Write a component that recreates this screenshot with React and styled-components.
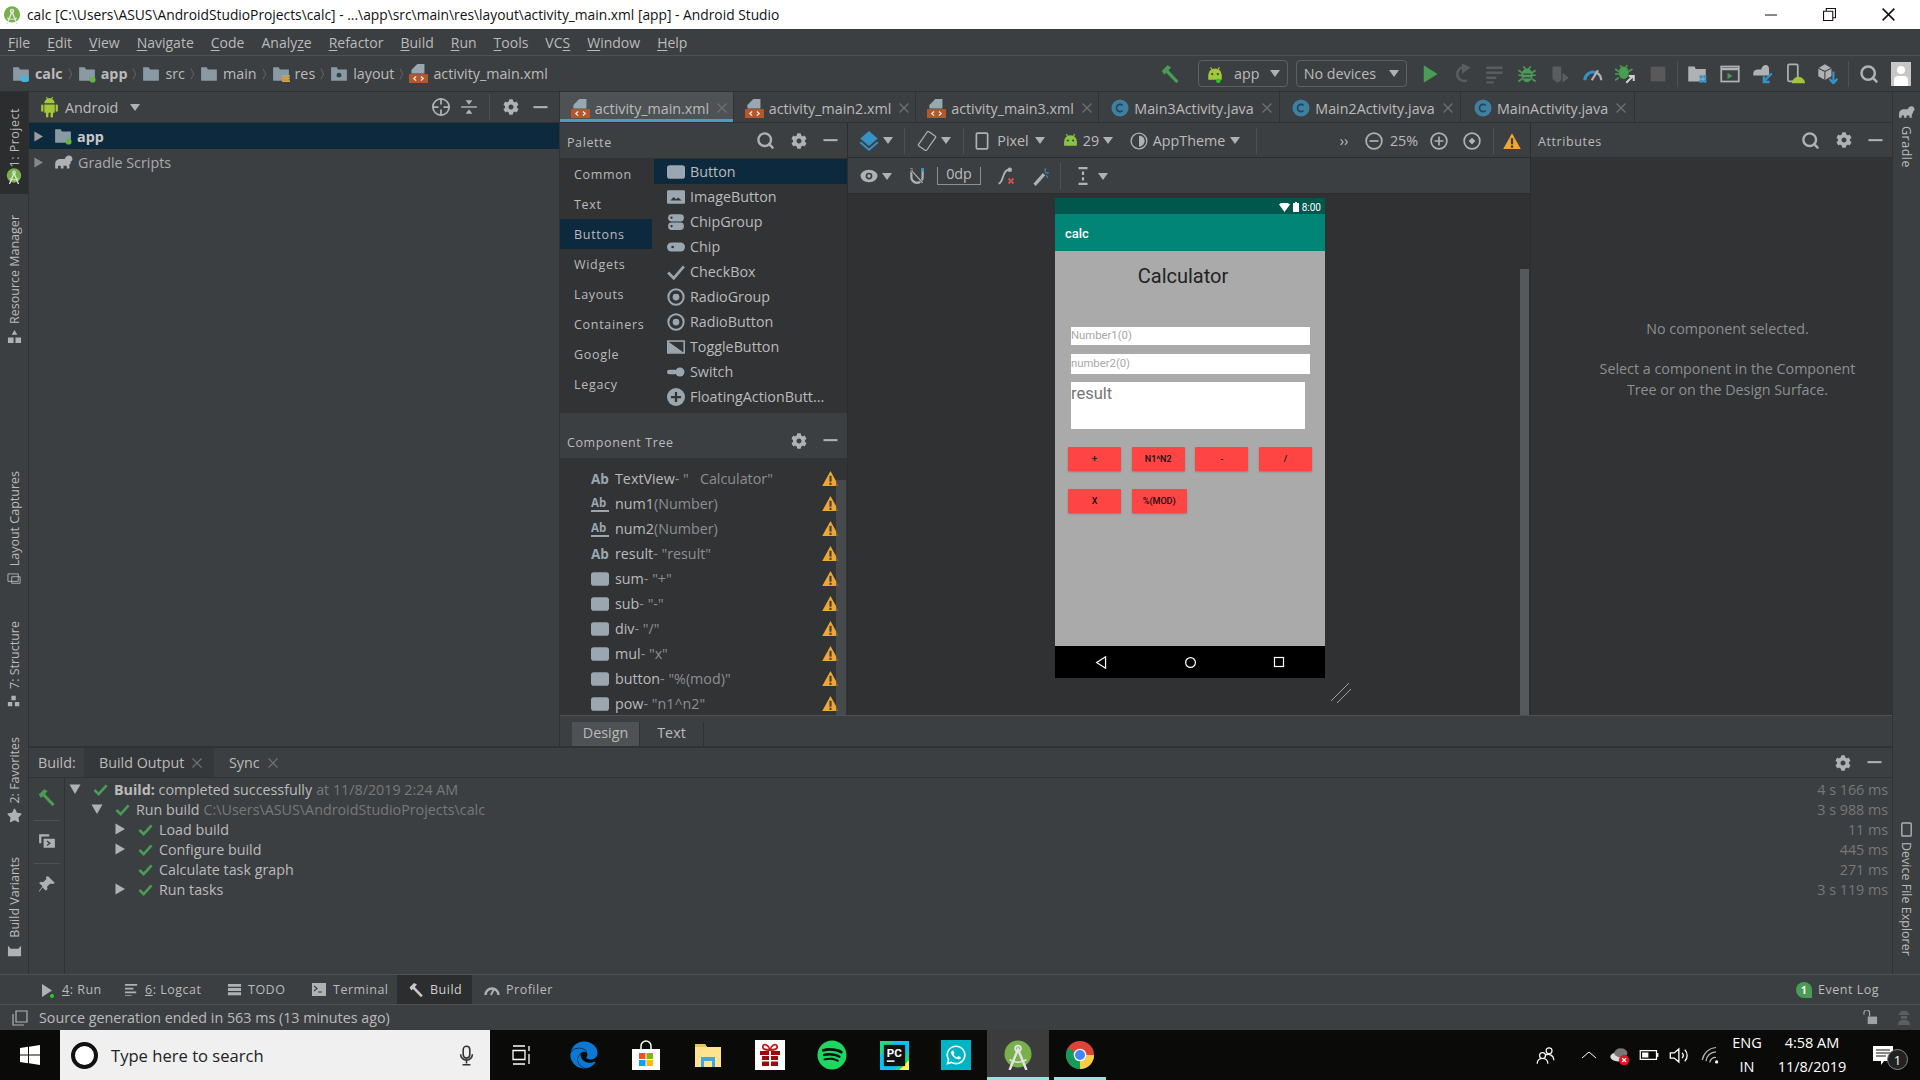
import React from "react";
import styled, { createGlobalStyle } from "styled-components";
import { Search } from "lucide-react";
import { FaCog, FaEdge, FaSpotify, FaWhatsapp, FaStar } from "react-icons/fa";

const UI = `"Open Sans", "Noto Sans", sans-serif`;
const GREY = "#afb1b3";

const GlobalStyle = createGlobalStyle`
  html, body { margin: 0; padding: 0; background: #3c3f41; }
  * { box-sizing: border-box; }
`;

/* icons */
const Ic = ({ s = 16, w, h, vb = "0 0 16 16", children }) => (
  <svg width={w || s} height={h || s} viewBox={vb} style={{ flexShrink: 0, display: "block" }}>
    {children}
  </svg>
);
const Folder = ({ s = 18, children }) => (
  <Ic s={s}>
    <path d="M1 2h5l1 2h8v10H1z" fill="#8a9aa5" />
    {children}
  </Ic>
);
const AppFolder = ({ s }) => (
  <Folder s={s}>
    <circle cx="13" cy="13" r="2.6" fill="#62b543" />
  </Folder>
);
const CalcFolder = () => (
  <Folder>
    <path d="M8 10h7v3a2 2 0 0 1-2 2h-3a2 2 0 0 1-2-2z" fill="#40b6e0" />
  </Folder>
);
const ResFolder = () => (
  <Folder>
    <path d="M9 9h7v1.4H9zM9 11.3h7v1.4H9zM9 13.6h7V15H9z" fill="#d9a343" />
  </Folder>
);
const LayoutFolder = () => (
  <Folder>
    <circle cx="8" cy="9" r="2.2" fill="#3c3f41" />
  </Folder>
);
const Xml = () => (
  <Ic s={19}>
    <path d="M7 0h6v8H2V5z" fill="#9aa7b0" />
    <rect x="0" y="8.5" width="16" height="7.5" fill="#b4572a" />
    <path d="M6 10.5 4 12.2l2 1.8M10 10.5l2 1.7-2 1.8" fill="none" stroke="#eee" strokeWidth="1" />
  </Ic>
);
const ClassIcon = () => (
  <Ic s={18}>
    <circle cx="8" cy="8" r="7.6" fill="#3f7f9f" />
    <path d="M10.4 5.8a3.2 3.2 0 1 0 0 4.4" fill="none" stroke="#20465a" strokeWidth="1.4" />
  </Ic>
);
const Android = ({ s = 18, c = "#a4c639", dot }) => (
  <Ic s={s}>
    <path d="M2 9a6 6 0 0 1 12 0v4H2z" fill={c} />
    <path d="M4 2l2 3M12 2l-2 3" stroke={c} strokeWidth="1" />
    <circle cx="5.5" cy="8" r="1" fill="#3c3f41" />
    <circle cx="10.5" cy="8" r="1" fill="#3c3f41" />
    {dot && <circle cx="11" cy="14" r="2" fill="#1fd11f" />}
  </Ic>
);
const AndroidFull = () => (
  <Ic w={17} h={22} vb="0 0 16 21">
    <path d="M3 7a5 5 0 0 1 10 0zM3 8h10v8H3z" fill="#a4c639" />
    <path d="M5 1l1.4 2.4M11 1L9.6 3.4" stroke="#a4c639" />
    <rect x="0" y="8" width="2.2" height="7" rx="1" fill="#a4c639" />
    <rect x="13.8" y="8" width="2.2" height="7" rx="1" fill="#a4c639" />
    <rect x="4.6" y="15" width="2.4" height="5.5" rx="1" fill="#a4c639" />
    <rect x="9" y="15" width="2.4" height="5.5" rx="1" fill="#a4c639" />
  </Ic>
);
const StudioBadge = ({ s = 18 }) => (
  <Ic s={s}>
    <circle cx="8" cy="7.5" r="7.2" fill="#78b04a" />
    <path d="M3.5 16 8 5l4.5 11" fill="none" stroke="#e4e4e4" strokeWidth="1.3" />
    <path d="M3.5 10.5a6 4 0 0 0 9 0" fill="none" stroke="#e4e4e4" strokeWidth=".9" />
    <circle cx="8" cy="4.5" r="1.5" fill="none" stroke="#e4e4e4" strokeWidth="1" />
  </Ic>
);
const Elephant = ({ s = 20, c = GREY }) => (
  <Ic s={s}>
    <path d="M1 13V9c0-2.5 2-4 4.5-4H9c.6-1.8 2-3 3.6-3C14.5 2 15.5 3.3 15.5 5c0 1.3-.6 2-1.5 2.2V9l-1 .5V13h-2.2v-2.2H8V13H5.7v-2.2H3.4V13z" fill={c} />
  </Ic>
);
const Hammer = ({ s = 18, c = "#499c54" }) => (
  <Ic s={s}>
    <path d="M1.5 5.5 6 1l3 1.5L6.800 5l8 8.500-1.800 1.800-8-8.300-1.600 1.500z" fill={c} />
  </Ic>
);
const Check = ({ s = 15 }) => (
  <Ic s={s}>
    <path d="M1.5 8.500 6 13 14.500 3.500" fill="none" stroke="#499c54" strokeWidth="2.8" />
  </Ic>
);
const Tri = ({ dir = "right", s = 12, c = GREY }) => (
  <Ic s={s} vb="0 0 12 12">
    <path d={dir === "right" ? "M1.5 0.500 11 6l-9.500 5.500z" : "M0.5 1.500h11L6 11z"} fill={c} />
  </Ic>
);
const Caret = ({ c = GREY }) => (
  <Ic w={10} h={7} vb="0 0 10 7">
    <path d="M0 0h10L5 7z" fill={c} />
  </Ic>
);
const Gear = ({ s = 16 }) => <FaCog size={s} color={GREY} />;
const Find = ({ s = 19 }) => <Search size={s} color={GREY} strokeWidth={3} />;
const Dash = () => (
  <Ic s={15}>
    <rect x="0.5" y="6.5" width="15" height="2.2" fill={GREY} />
  </Ic>
);
const Warn = ({ s = 17 }) => (
  <Ic s={s}>
    <path d="M8 1 15.800 15H.2z" fill="#f0a732" />
    <rect x="7" y="5.5" width="2" height="5.5" fill="#3c3f41" />
    <rect x="7" y="12" width="2" height="2" fill="#3c3f41" />
  </Ic>
);
const CloseX = ({ s = 10, c = "#6f7173" }) => (
  <Ic s={s} vb="0 0 10 10">
    <path d="M.5.5l9 9M9.500.500l-9 9" stroke={c} strokeWidth="1.2" />
  </Ic>
);
const BtnGlyph = ({ s = 18 }) => (
  <Ic s={s}>
    <rect x="0" y="2" width="16" height="12" rx="2.5" fill="#9aa7b0" />
  </Ic>
);
const Ring = ({ s = 18, inner = 3 }) => (
  <Ic s={s}>
    <circle cx="8" cy="8" r="6.8" fill="none" stroke="#9aa7b0" strokeWidth="1.8" />
    <circle cx="8" cy="8" r={inner} fill="#9aa7b0" />
  </Ic>
);
const Glyphs = {
  Button: <BtnGlyph />,
  ImageButton: (
    <Ic s={18}>
      <rect y="2" width="16" height="12" rx="1" fill="#9aa7b0" />
      <path d="M3 11l3-3 2 2 2-1.500 3 2.500z" fill="#313335" />
    </Ic>
  ),
  ChipGroup: (
    <Ic s={18}>
      <rect x="1" y="1" width="14" height="6.5" rx="3" fill="#9aa7b0" />
      <rect x="1" y="8.5" width="14" height="6.5" rx="3" fill="#9aa7b0" />
      <circle cx="4" cy="4.2" r="1" fill="#313335" />
      <circle cx="4" cy="11.7" r="1" fill="#313335" />
    </Ic>
  ),
  Chip: (
    <Ic s={18}>
      <rect y="4" width="16" height="8" rx="4" fill="#9aa7b0" />
      <circle cx="5" cy="8" r="1.2" fill="#313335" />
    </Ic>
  ),
  CheckBox: (
    <Ic s={18}>
      <path d="M1 8.500 6 13.500 15 3" fill="none" stroke="#9aa7b0" strokeWidth="2.4" />
    </Ic>
  ),
  RadioGroup: <Ring />,
  RadioButton: <Ring />,
  ToggleButton: (
    <Ic s={18}>
      <rect x=".7" y="2.7" width="14.6" height="10.6" fill="none" stroke="#9aa7b0" strokeWidth="1.4" />
      <path d="M1 3l14 10H1z" fill="#9aa7b0" />
    </Ic>
  ),
  Switch: (
    <Ic s={18}>
      <rect y="6" width="9" height="4" rx="2" fill="#9aa7b0" />
      <circle cx="11.5" cy="8" r="4" fill="#9aa7b0" />
    </Ic>
  ),
  "FloatingActionButt...": (
    <Ic s={18}>
      <circle cx="8" cy="8" r="8" fill="#9aa7b0" />
      <path d="M8 3.500v9M3.500 8h9" stroke="#313335" strokeWidth="2" />
    </Ic>
  ),
};

/* shell */
const Page = styled.div`
  width: 1920px;
  height: 1080px;
  display: flex;
  flex-direction: column;
  overflow: hidden;
  background: #3c3f41;
  color: #bbbbbb;
  font-family: ${UI};
  font-size: 14.3px;
`;
const TitleBar = styled.div`
  height: 29px;
  flex-shrink: 0;
  background: #fff;
  color: #111;
  display: flex;
  align-items: center;
  padding: 0 2px 0 3px;
  font-size: 13.8px;
`;
const TitleText = styled.div`
  flex: 1;
  margin-left: 6px;
  white-space: nowrap;
`;
const WinBtn = styled.div`
  width: 59px;
  display: flex;
  justify-content: center;
`;
const MenuBar = styled.div`
  height: 27px;
  flex-shrink: 0;
  display: flex;
  align-items: center;
  gap: 17px;
  padding-left: 8px;
  font-size: 14px;
  border-bottom: 1px solid #515151;
  u { text-underline-offset: 2px; }
`;
const NavBar = styled.div`
  height: 36px;
  flex-shrink: 0;
  display: flex;
  align-items: center;
  padding: 0 9px 0 12px;
  border-bottom: 1px solid #2f3132;
`;
const Crumb = styled.div`
  display: flex;
  align-items: center;
  gap: 5px;
  font-weight: ${(p) => (p.$bold ? 700 : 400)};
`;
const CrumbSep = styled.div`
  width: 8px;
  height: 8px;
  margin: 0 5px 0 2px;
  border-top: 1px solid #6b6d6f;
  border-right: 1px solid #6b6d6f;
  transform: scaleX(0.55) rotate(45deg);
`;
const NavRight = styled.div`
  margin-left: auto;
  display: flex;
  align-items: center;
`;
const Combo = styled.div`
  width: ${(p) => p.$w}px;
  height: 27px;
  margin-left: ${(p) => p.$ml || 0}px;
  border: 1px solid #5e6060;
  border-radius: 4px;
  display: flex;
  align-items: center;
  justify-content: space-between;
  padding: 0 7px;
  gap: 4px;
`;
const Slot = styled.div`
  width: ${(p) => p.$w}px;
  flex-shrink: 0;
  display: flex;
  align-items: center;
  justify-content: center;
  gap: ${(p) => p.$gap || 0}px;
`;
const VSep = styled.div`
  width: 1px;
  height: 26px;
  flex-shrink: 0;
  background: #515151;
  margin: 0 ${(p) => p.$m || 0}px;
`;
const Avatar = styled.div`
  width: 20px;
  height: 24px;
  background: #c7c7c7;
  position: relative;
  overflow: hidden;
  margin-left: 6px;
  &::before {
    content: "";
    position: absolute;
    left: 6px;
    top: 4px;
    width: 8px;
    height: 8px;
    border-radius: 50%;
    background: #fff;
  }
  &::after {
    content: "";
    position: absolute;
    left: 3px;
    top: 14px;
    width: 14px;
    height: 12px;
    border-radius: 4px 4px 0 0;
    background: #fff;
  }
`;

const Main = styled.div`
  height: 882px;
  flex-shrink: 0;
  display: flex;
`;
const LeftStripe = styled.div`
  width: 29px;
  flex-shrink: 0;
  border-right: 1px solid #323232;
  display: flex;
  flex-direction: column;
  align-items: stretch;
`;
const RightStripe = styled.div`
  width: 28px;
  flex-shrink: 0;
  border-left: 1px solid #323232;
  display: flex;
  flex-direction: column;
  align-items: center;
  justify-content: space-between;
  padding: 12px 0 18px;
`;
const StripeItem = styled.div`
  display: flex;
  flex-direction: column;
  align-items: center;
  gap: ${(p) => (p.$active ? 1 : 5)}px;
  margin-top: ${(p) => p.$mt || 0}px;
  padding: ${(p) => (p.$active ? "16px 0 10px" : "0")};
  background: ${(p) => (p.$active ? "#2b2d2e" : "transparent")};
`;
const VText = styled.div`
  writing-mode: vertical-rl;
  transform: ${(p) => (p.$down ? "none" : "rotate(180deg)")};
  font-size: 12.5px;
  white-space: nowrap;
  letter-spacing: ${(p) => p.$ls || 0}px;
`;
const Center = styled.div`
  flex: 1;
  min-width: 0;
  display: flex;
  flex-direction: column;
`;
const Upper = styled.div`
  height: 654px;
  flex-shrink: 0;
  display: flex;
`;

/* project */
const Project = styled.div`
  width: 531px;
  flex-shrink: 0;
  background: #3c3f41;
  border-right: 1px solid #323232;
`;
const PanelHead = styled.div`
  height: ${(p) => p.$h || 31}px;
  display: flex;
  align-items: center;
  padding: 0 ${(p) => p.$pr || 0}px 0 ${(p) => p.$pl || 0}px;
  border-bottom: 1px solid #323232;
  gap: ${(p) => p.$gap || 0}px;
`;
const HeadLabel = styled.div`
  font-size: 12.5px;
  letter-spacing: 0.6px;
  margin-right: auto;
  padding-top: 3px;
`;
const ProjRow = styled.div`
  height: 26px;
  display: flex;
  align-items: center;
  padding-left: 4px;
  gap: 10px;
  font-weight: ${(p) => (p.$sel ? 700 : 400)};
  background: ${(p) => (p.$sel ? "#0d293e" : "transparent")};
  color: ${(p) => (p.$sel ? "#c8c8c8" : "#a9abad")};
`;
const ProjLabel = styled.div`
  display: flex;
  align-items: center;
  gap: 5px;
`;

/* editor */
const Editor = styled.div`
  flex: 1;
  min-width: 0;
  display: flex;
  flex-direction: column;
`;
const Tabs = styled.div`
  height: 31px;
  flex-shrink: 0;
  display: flex;
  border-bottom: 1px solid #323232;
`;
const Tab = styled.div`
  width: ${(p) => p.$w}px;
  display: flex;
  align-items: center;
  justify-content: center;
  gap: 5px;
  padding: 2px 0 0 5px;
  border-right: 1px solid #323232;
  background: ${(p) => (p.$active ? "#4e5254" : "transparent")};
  box-shadow: ${(p) => (p.$active ? "inset 0 -3px 0 #4a9ec0" : "none")};
`;
const TabClose = styled.div`
  margin-left: 3px;
`;
const DesignRow = styled.div`
  height: 592px;
  flex-shrink: 0;
  display: flex;
`;
const Side = styled.div`
  width: 288px;
  flex-shrink: 0;
  display: flex;
  flex-direction: column;
  gap: 10px;
  border-right: 1px solid #2b2d2e;
`;
const PaletteBody = styled.div`
  height: 254px;
  display: flex;
  background: #313335;
`;
const Cats = styled.div`
  width: 94px;
  flex-shrink: 0;
`;
const Cat = styled.div`
  height: 30px;
  width: 92px;
  display: flex;
  align-items: center;
  padding-left: 14px;
  font-size: 12.5px;
  letter-spacing: 0.7px;
  background: ${(p) => (p.$sel ? "#0d293e" : "transparent")};
`;
const PalList = styled.div`
  flex: 1;
`;
const PalItem = styled.div`
  height: 25px;
  display: flex;
  align-items: center;
  gap: 5px;
  padding-left: 13px;
  white-space: nowrap;
  background: ${(p) => (p.$sel ? "#0d293e" : "transparent")};
`;
const TreeList = styled.div`
  position: relative;
  height: 256px;
  padding-top: 7px;
  background: #313335;
  overflow: hidden;
`;
const TreeRow = styled.div`
  height: 25px;
  display: flex;
  align-items: center;
  padding: 0 8px 0 31px;
`;
const TreeIcon = styled.div`
  width: ${(p) => (p.$line ? 18 : 24)}px;
  margin-right: ${(p) => (p.$line ? 6 : 0)}px;
  font-weight: 700;
  font-size: ${(p) => (p.$line ? 11.5 : 13.5)}px;
  color: #9aa7b0;
  line-height: 14px;
  border-bottom: ${(p) => (p.$line ? "2px solid #9aa7b0" : "none")};
`;
const TreeText = styled.div`
  flex: 1;
  color: #8d8f91;
  white-space: pre;
`;
const TreeScroll = styled.div`
  position: absolute;
  right: 1px;
  top: 21px;
  bottom: 0;
  width: 10px;
  background: #4c5052;
  opacity: 0.8;
`;
const DesignCol = styled.div`
  width: 683px;
  flex-shrink: 0;
  display: flex;
  flex-direction: column;
  border-right: 1px solid #2b2d2e;
`;
const Toolbar = styled.div`
  height: ${(p) => p.$h}px;
  flex-shrink: 0;
  display: flex;
  align-items: center;
  padding-top: 1px;
  border-bottom: 1px solid #2b2d2e;
`;
const Grow = styled.div`
  flex: 1;
`;
const Gap = styled.div`
  width: ${(p) => p.$w}px;
  flex-shrink: 0;
`;
const ZeroDp = styled.div`
  width: 44px;
  text-align: center;
  border-bottom: 1px solid #8d8f91;
  border-left: 1px solid #8d8f91;
  border-right: 1px solid #8d8f91;
  line-height: 14px;
  height: 18px;
`;
const Surface = styled.div`
  position: relative;
  flex: 1;
  background: #2f3132;
  padding: 4px 0 0 207px;
`;
const SurfaceScroll = styled.div`
  position: absolute;
  right: 1px;
  top: 75px;
  bottom: 0;
  width: 9px;
  background: #55595b;
`;
const ResizeMark = styled.div`
  position: absolute;
  left: 482px;
  top: 488px;
`;

/* phone */
const Phone = styled.div`
  width: 270px;
  height: 480px;
  display: flex;
  flex-direction: column;
  font-family: Roboto, sans-serif;
`;
const PhoneStatus = styled.div`
  height: 16px;
  padding: 2px 4px 0 0;
  background: #00574b;
  color: #fff;
  font-size: 10px;
  display: flex;
  align-items: center;
  justify-content: flex-end;
  gap: 3px;
`;
const AppBar = styled.div`
  height: 37px;
  background: #008577;
  color: #fff;
  font-size: 13px;
  font-weight: 500;
  display: flex;
  align-items: center;
  padding: 1px 0 0 10px;
`;
const PhoneBody = styled.div`
  flex: 1;
  background: #aaaaaa;
  padding-left: 16px;
  display: flex;
  flex-direction: column;
`;
const CalcTitle = styled.div`
  width: 224px;
  text-align: center;
  margin-top: 13px;
  font-size: 20px;
  line-height: 24px;
  color: #222;
`;
const Field = styled.div`
  width: ${(p) => p.$w}px;
  height: ${(p) => p.$h}px;
  margin-top: ${(p) => p.$mt}px;
  background: #fff;
  color: ${(p) => (p.$big ? "#757575" : "#a8a8a8")};
  font-size: ${(p) => (p.$big ? 16.5 : 11.3)}px;
  line-height: ${(p) => (p.$big ? 24 : p.$h)}px;
`;
const CalcRow = styled.div`
  display: flex;
  gap: 10.7px;
  margin-left: -3px;
  margin-top: ${(p) => p.$mt}px;
`;
const CalcBtn = styled.div`
  width: ${(p) => p.$w || 53}px;
  height: 24px;
  background: #ff4444;
  color: #111;
  border-radius: 1px;
  font-size: 9px;
  font-weight: 500;
  display: flex;
  align-items: center;
  justify-content: center;
  box-shadow: 0 1px 2px rgba(0, 0, 0, 0.25);
`;
const PhoneNav = styled.div`
  height: 32px;
  background: #000;
  display: flex;
  justify-content: space-between;
  align-items: center;
  padding: 0 40px;
`;

/* attributes */
const Attr = styled.div`
  flex: 1;
  min-width: 0;
  display: flex;
  flex-direction: column;
`;
const AttrBody = styled.div`
  flex: 1;
  background: #313335;
  text-align: center;
  color: #8d8f91;
  padding: 160px 0 0 32px;
  line-height: 21px;
`;
const AttrMsg = styled.div`
  margin-bottom: 19px;
`;
const DesignTabs = styled.div`
  height: 31px;
  flex-shrink: 0;
  display: flex;
  padding-left: 12px;
  padding-top: 6px;
  border-top: 1px solid #515151;
`;
const DTab = styled.div`
  width: ${(p) => p.$w}px;
  display: flex;
  align-items: center;
  justify-content: center;
  padding-bottom: 4px;
  background: ${(p) => (p.$active ? "#4e5254" : "#3c3f41")};
  border-right: 1px solid #323232;
`;

/* build */
const Build = styled.div`
  flex: 1;
  display: flex;
  flex-direction: column;
  border-top: 2px solid #323232;
`;
const BuildHead = styled.div`
  height: 30px;
  flex-shrink: 0;
  display: flex;
  align-items: center;
  padding: 0 3px 0 9px;
  border-bottom: 1px solid #323232;
`;
const BuildLabel = styled.div`
  width: 46px;
`;
const BuildTab = styled.div`
  width: ${(p) => p.$w}px;
  height: 100%;
  display: flex;
  align-items: center;
  gap: 8px;
  padding-left: ${(p) => p.$pl}px;
  background: ${(p) => (p.$active ? "#35383a" : "transparent")};
`;
const BuildBody = styled.div`
  flex: 1;
  display: flex;
`;
const BuildTools = styled.div`
  width: 36px;
  flex-shrink: 0;
  border-right: 1px solid #323232;
  padding-top: 10px;
  display: flex;
  flex-direction: column;
  align-items: center;
`;
const BuildToolSep = styled.div`
  width: 26px;
  height: 1px;
  background: #515151;
  margin: 13px 0 11px;
`;
const BuildTree = styled.div`
  flex: 1;
  padding: 1px 4px 0 0;
`;
const BuildRow = styled.div`
  height: 20px;
  display: flex;
  align-items: center;
  white-space: nowrap;
  padding-left: ${(p) => p.$indent}px;
`;
const ArrowBox = styled.div`
  width: 24px;
`;
const CheckBox = styled.div`
  width: 21px;
`;
const Muted = styled.span`
  color: #787878;
  margin-left: 4px;
`;
const Time = styled.div`
  margin-left: auto;
  color: #787878;
`;

/* bottom */
const BottomStripe = styled.div`
  height: 30px;
  flex-shrink: 0;
  display: flex;
  align-items: stretch;
  padding: 0 41px 0 40px;
  border-top: 1px solid #515151;
  font-size: 12.5px;
  letter-spacing: 0.5px;
`;
const BottomTool = styled.div`
  width: ${(p) => p.$w}px;
  display: flex;
  align-items: center;
  gap: 6px;
  padding-left: ${(p) => p.$pl || 0}px;
  background: ${(p) => (p.$active ? "#2b2d2e" : "transparent")};
  color: ${(p) => (p.$active ? "#d0d0d0" : "#bbb")};
`;
const EventLog = styled.div`
  margin-left: auto;
  display: flex;
  align-items: center;
  gap: 6px;
`;
const Badge = styled.div`
  width: 16px;
  height: 16px;
  background: #499c54;
  color: #fff;
  border-radius: 50% 50% 0 50%;
  font-size: 10px;
  font-weight: 700;
  display: flex;
  align-items: center;
  justify-content: center;
`;
const StatusBar = styled.div`
  height: 26px;
  flex-shrink: 0;
  display: flex;
  align-items: center;
  gap: 11px;
  padding: 0 8px 0 12px;
  border-top: 1px solid #515151;
`;
const StatusRight = styled.div`
  margin-left: auto;
  display: flex;
  align-items: center;
  gap: 18px;
`;

/* taskbar */
const Taskbar = styled.div`
  height: 50px;
  flex-shrink: 0;
  background: #0a0a08;
  display: flex;
  align-items: center;
  color: #fff;
`;
const StartBtn = styled.div`
  width: 60px;
  display: flex;
  justify-content: center;
`;
const SearchBox = styled.div`
  width: 430px;
  height: 50px;
  background: #f0f0f0;
  color: #222;
  display: flex;
  align-items: center;
  padding: 0 6px 0 11px;
  gap: 13px;
  font-size: 16.6px;
`;
const Cortana = styled.div`
  width: 27px;
  height: 27px;
  border-radius: 50%;
  border: 4px solid #111;
  background: #fff;
`;
const SearchText = styled.div`
  flex: 1;
`;
const TaskSlot = styled.div`
  width: 62px;
  height: 50px;
  flex-shrink: 0;
  display: flex;
  align-items: center;
  justify-content: center;
  position: relative;
  background: ${(p) => (p.$active ? "#3c3c3c" : "transparent")};
  &::after {
    content: "";
    display: ${(p) => (p.$open ? "block" : "none")};
    position: absolute;
    left: ${(p) => (p.$active ? 0 : 5)}px;
    right: ${(p) => (p.$active ? 0 : 5)}px;
    bottom: 0;
    height: 3px;
    background: #8ee6e6;
  }
`;
const WhatsBox = styled.div`
  width: 30px;
  height: 30px;
  background: #00b4c4;
  display: flex;
  align-items: center;
  justify-content: center;
`;
const Tray = styled.div`
  margin-left: auto;
  display: flex;
  align-items: center;
`;
const TrayText = styled.div`
  width: ${(p) => p.$w}px;
  text-align: center;
  font-size: 14.5px;
  line-height: 24px;
  white-space: nowrap;
`;
const NotifyWrap = styled.div`
  position: relative;
  width: 65px;
  padding-right: 10px;
  display: flex;
  justify-content: center;
`;
const NotifyCount = styled.div`
  position: absolute;
  left: 32px;
  top: 5px;
  width: 21px;
  height: 21px;
  border-radius: 50%;
  background: #222;
  border: 1px solid #888;
  font-size: 13px;
  display: flex;
  align-items: center;
  justify-content: center;
`;

const crumbs = [
  [<CalcFolder key="i" />, "calc", true],
  [<AppFolder key="i" />, "app", true],
  [<Folder key="i" />, "src"],
  [<Folder key="i" />, "main"],
  [<ResFolder key="i" />, "res"],
  [<LayoutFolder key="i" />, "layout"],
];
const menus = [
  ["F", "ile"], ["E", "dit"], ["V", "iew"], ["N", "avigate"], ["C", "ode"], ["Analy", "ze", true],
  ["R", "efactor"], ["B", "uild"], ["R", "un"], ["T", "ools"], ["VC", "S", true], ["W", "indow"], ["H", "elp"],
];
const editorTabs = [
  ["activity_main.xml", 174, "xml", true],
  ["activity_main2.xml", 182, "xml"],
  ["activity_main3.xml", 183, "xml"],
  ["Main3Activity.java", 181, "java"],
  ["Main2Activity.java", 181, "java"],
  ["MainActivity.java", 174, "java"],
];
const categories = ["Common", "Text", "Buttons", "Widgets", "Layouts", "Containers", "Google", "Legacy"];
const treeRows = [
  ["ab", "TextView", '- "   Calculator"'],
  ["line", "num1", "(Number)"],
  ["line", "num2", "(Number)"],
  ["ab", "result", '- "result"'],
  ["btn", "sum", '- "+"'],
  ["btn", "sub", '- "-"'],
  ["btn", "div", '- "/"'],
  ["btn", "mul", '- "x"'],
  ["btn", "button", '- "%(mod)"'],
  ["btn", "pow", '- "n1^n2"'],
];

const NavTools = () => (
  <>
    <Slot $w={32.6}>
      <Ic s={20}><path d="M3 1l11 7-11 7z" fill="#499c54" /></Ic>
    </Slot>
    <Slot $w={32.6}>
      <Ic s={20}><path d="M12 3a5.500 5.500 0 1 0 0 10M9 1l4 2-4 3z" fill="none" stroke="#5a5d5f" strokeWidth="2" /></Ic>
    </Slot>
    <Slot $w={32.6}>
      <Ic s={20}><path d="M1 2h13v2H1zM1 6h13v2H1zM1 10h8v2H1zM1 14h6v1.500H1z" fill="#5a5d5f" /></Ic>
    </Slot>
    <Slot $w={32.6}>
      <Ic s={20}>
        <ellipse cx="8" cy="9" rx="4.5" ry="5.5" fill="#499c54" />
        <path d="M1 5l3 2M15 5l-3 2M1 9h3M15 9h-3M1 14l3-2M15 14l-3-2M5 2l2 2M11 2 9 4" stroke="#499c54" strokeWidth="1.3" />
        <path d="M5 8h6M5 11h6" stroke="#3c3f41" />
      </Ic>
    </Slot>
    <Slot $w={32.6}>
      <Ic s={20}><path d="M2 2h7v11l-3 2-4-3zM10 7l5 4-5 4z" fill="#5a5d5f" /></Ic>
    </Slot>
    <Slot $w={32.6}>
      <Ic s={20}>
        <path d="M1.500 13a6.500 6.500 0 0 1 9-6" fill="none" stroke="#3592c4" strokeWidth="2.4" />
        <path d="M11 7a6.500 6.500 0 0 1 3.500 6M7 13l5-8" fill="none" stroke="#afb1b3" strokeWidth="1.8" />
      </Ic>
    </Slot>
    <Slot $w={32.6}>
      <Ic s={20}>
        <ellipse cx="7" cy="7" rx="4" ry="5" fill="#499c54" />
        <path d="M0 4l3 2M14 4l-3 2M0 8h3M0 13l3-2M4 1l2 2M10 1 8 3" stroke="#499c54" strokeWidth="1.3" />
        <path d="M9 15l5-5M11 9.500h4v4" fill="none" stroke="#d0d0d0" strokeWidth="1.6" />
      </Ic>
    </Slot>
    <Slot $w={32.6}>
      <Ic s={18}><rect x="1.5" y="1.5" width="13" height="13" fill="#59595a" /></Ic>
    </Slot>
    <VSep $m={3} />
    <Slot $w={32.5}>
      <Ic s={20}>
        <path d="M1 2h5l1 2h8v10H1z" fill="#afb1b3" />
        <path d="M10 9h2.500v2.500H10zM13 9h2.500v2.500H13zM10 12.300h2.500v2.700H10zM13 12.300h2.500v2.700H13z" fill="#3592c4" />
      </Ic>
    </Slot>
    <Slot $w={32.5}>
      <Ic s={20}>
        <rect x="1" y="2" width="14" height="12" fill="none" stroke="#afb1b3" strokeWidth="1.4" />
        <path d="M1 3h14v2H1z" fill="#afb1b3" />
        <path d="M6 7l4 2.500L6 12z" fill="#499c54" />
      </Ic>
    </Slot>
    <Slot $w={32.5}>
      <Ic s={21}>
        <path d="M1 11V8c0-2 1.500-3 3.500-3H7c.5-2 1.800-3.500 3.500-3.500 1.700 0 2.500 1.500 2.500 3v5H1z" fill="#afb1b3" />
        <path d="M15 8l-6 6M9 10v4.500h4.500" fill="none" stroke="#3592c4" strokeWidth="1.8" />
      </Ic>
    </Slot>
    <Slot $w={32.5}>
      <Ic s={21}>
        <rect x="3" y="1" width="7.5" height="13" rx="1" fill="none" stroke="#afb1b3" strokeWidth="1.3" />
        <path d="M6 15.500a5 5 0 0 1 10 0z" fill="#a4c639" />
      </Ic>
    </Slot>
    <Slot $w={32.5}>
      <Ic s={21}>
        <path d="M1 4l5-3 5 3v6l-5 3-5-3z" fill="#afb1b3" />
        <path d="M6 6.500V13M1 4l5 2.500L11 4" stroke="#3c3f41" strokeWidth=".8" fill="none" />
        <path d="M12.500 6.500v8M9.500 12l3 3.500 3-3.500" fill="none" stroke="#3592c4" strokeWidth="1.7" />
      </Ic>
    </Slot>
    <VSep $m={4.25} />
    <Slot $w={32}><Find s={20} /></Slot>
    <Avatar />
  </>
);

const App = () => (
  <Page>
    <GlobalStyle />
    <TitleBar>
      <StudioBadge s={18} />
      <TitleText>
        {"calc [C:\\Users\\ASUS\\AndroidStudioProjects\\calc] - ...\\app\\src\\main\\res\\layout\\activity_main.xml [app] - Android Studio"}
      </TitleText>
      <WinBtn>
        <Ic s={12} vb="0 0 12 12"><path d="M0 6h12" stroke="#111" /></Ic>
      </WinBtn>
      <WinBtn>
        <Ic s={13} vb="0 0 12 12">
          <path d="M.5 3h8.500v8.500H.5zM3 3V.5h8.500V9H9" fill="none" stroke="#111" />
        </Ic>
      </WinBtn>
      <WinBtn>
        <CloseX s={13} c="#111" />
      </WinBtn>
    </TitleBar>

    <MenuBar>
      {menus.map(([a, b, second], i) => (
        <div key={i}>
          {second ? <>{a}<u>{b[0]}</u>{b.slice(1)}</> : <><u>{a}</u>{b}</>}
        </div>
      ))}
    </MenuBar>

    <NavBar>
      {crumbs.map(([icon, text, bold]) => (
        <React.Fragment key={text}>
          <Crumb $bold={bold}>{icon}{text}</Crumb>
          <CrumbSep />
        </React.Fragment>
      ))}
      <Crumb><Xml />activity_main.xml</Crumb>
      <NavRight>
        <Slot $w={30}><Hammer s={20} /></Slot>
        <Combo $w={90} $ml={13}>
          <Android s={18} c="#a4c639" dot />
          <span>app</span>
          <Caret />
        </Combo>
        <Combo $w={111} $ml={8}>
          <span>No devices</span>
          <Caret />
        </Combo>
        <Gap $w={6.5} />
        <NavTools />
      </NavRight>
    </NavBar>

    <Main>
      <LeftStripe>
        <StripeItem $active>
          <VText $ls={0.5}>1: Project</VText>
          <StudioBadge s={16} />
        </StripeItem>
        <StripeItem $mt={21}>
          <VText>Resource Manager</VText>
          <Ic s={15}><path d="M8 1l3 5H5zM1 9h6v6H1zM9 9h6v6H9z" fill={GREY} /></Ic>
        </StripeItem>
        <StripeItem $mt={127}>
          <VText>Layout Captures</VText>
          <Ic s={15}><path d="M1 2h11v8H1zM5 5h9v7H5z" fill="none" stroke={GREY} /></Ic>
        </StripeItem>
        <StripeItem $mt={34}>
          <VText>7: Structure</VText>
          <Ic s={14}><path d="M1 9h5v5H1zM9 9h5v5H9zM5 2h5v5H5z" fill={GREY} /></Ic>
        </StripeItem>
        <StripeItem $mt={29}>
          <VText>2: Favorites</VText>
          <FaStar size={15} color={GREY} />
        </StripeItem>
        <StripeItem $mt={34}>
          <VText>Build Variants</VText>
          <Ic s={15}><path d="M1 3l3 3h8l3-3v11H1z" fill={GREY} /></Ic>
        </StripeItem>
      </LeftStripe>

      <Center>
        <Upper>
          <Project>
            <PanelHead $pl={4} $pr={4} $h={31}>
              <Slot $w={32}><AndroidFull /></Slot>
              <ProjLabel>Android</ProjLabel>
              <Gap $w={12} />
              <Caret />
              <Grow />
              <Slot $w={30}>
                <Ic s={20}>
                  <circle cx="8" cy="8" r="6.5" fill="none" stroke={GREY} strokeWidth="1.4" />
                  <path d="M8 1v5M8 10v5M1 8h5M10 8h5" stroke={GREY} strokeWidth="1.4" />
                </Ic>
              </Slot>
              <Slot $w={26}>
                <Ic s={18}>
                  <path d="M1 8h14" stroke={GREY} strokeWidth="1.3" />
                  <path d="M5 2h6L8 6zM5 14h6l-3-4z" fill={GREY} />
                </Ic>
              </Slot>
              <VSep $m={7} />
              <Slot $w={28}><Gear /></Slot>
              <Slot $w={30}><Dash /></Slot>
            </PanelHead>
            <ProjRow $sel>
              <Tri c="#9a9c9e" s={11} />
              <ProjLabel><AppFolder />app</ProjLabel>
            </ProjRow>
            <ProjRow>
              <Tri c="#85878a" s={11} />
              <ProjLabel><Elephant s={19} />Gradle Scripts</ProjLabel>
            </ProjRow>
          </Project>

          <Editor>
            <Tabs>
              {editorTabs.map(([name, w, kind, active]) => (
                <Tab key={name} $w={w} $active={active}>
                  {kind === "xml" ? <Xml /> : <ClassIcon />}
                  {name}
                  <TabClose><CloseX /></TabClose>
                </Tab>
              ))}
            </Tabs>

            <DesignRow>
              <Side>
                <div>
                  <PanelHead $h={36} $pl={7} $pr={9} $gap={16}>
                    <HeadLabel>Palette</HeadLabel>
                    <Find />
                    <Gear />
                    <Dash />
                  </PanelHead>
                  <PaletteBody>
                    <Cats>
                      {categories.map((c) => (
                        <Cat key={c} $sel={c === "Buttons"}>{c}</Cat>
                      ))}
                    </Cats>
                    <PalList>
                      {Object.keys(Glyphs).map((name) => (
                        <PalItem key={name} $sel={name === "Button"}>
                          {Glyphs[name]}
                          {name}
                        </PalItem>
                      ))}
                    </PalList>
                  </PaletteBody>
                </div>
                <div>
                  <PanelHead $h={36} $pl={7} $pr={9} $gap={16}>
                    <HeadLabel>Component Tree</HeadLabel>
                    <Gear />
                    <Dash />
                  </PanelHead>
                  <TreeList>
                    {treeRows.map(([kind, name, rest]) => (
                      <TreeRow key={name}>
                        <TreeIcon $line={kind === "line"}>
                          {kind === "btn" ? <BtnGlyph /> : "Ab"}
                        </TreeIcon>
                        <div>{name}</div>
                        <TreeText>{rest}</TreeText>
                        <Warn />
                      </TreeRow>
                    ))}
                    <TreeScroll />
                  </TreeList>
                </div>
              </Side>

              <DesignCol>
                <Toolbar $h={35}>
                  <Slot $w={56} $gap={4}>
                    <Ic s={20}>
                      <path d="M8 0l7 6-7 6-7-6z" fill="#3592c4" />
                      <path d="M1 9l7 6 7-6" fill="none" stroke="#3592c4" strokeWidth="1.6" />
                    </Ic>
                    <Caret />
                  </Slot>
                  <VSep />
                  <Slot $w={58} $gap={4}>
                    <Ic s={20}>
                      <rect x="4" y="1" width="8" height="14" rx="1" fill="none" stroke={GREY} transform="rotate(35 8 8)" />
                    </Ic>
                    <Caret />
                  </Slot>
                  <VSep />
                  <Slot $w={90} $gap={6}>
                    <Ic s={18}><rect x="3" y="1" width="10" height="14" rx="1" fill="none" stroke={GREY} strokeWidth="1.5" /></Ic>
                    Pixel
                    <Caret />
                  </Slot>
                  <Slot $w={67} $gap={4}>
                    <Android s={17} c="#8bc34a" />
                    29
                    <Caret />
                  </Slot>
                  <Slot $w={128} $gap={5}>
                    <Ic s={18}>
                      <circle cx="8" cy="8" r="7" fill="none" stroke={GREY} strokeWidth="1.2" />
                      <path d="M8 3a5 5 0 0 1 0 10z" fill={GREY} />
                    </Ic>
                    AppTheme
                    <Caret />
                  </Slot>
                  <Gap $w={7} />
                  <VSep />
                  <Grow />
                  <Slot $w={26}>››</Slot>
                  <Gap $w={2} />
                  <Slot $w={30}>
                    <Ic s={18}>
                      <circle cx="8" cy="8" r="7" fill="none" stroke={GREY} strokeWidth="1.5" />
                      <path d="M4 8h8" stroke={GREY} strokeWidth="1.5" />
                    </Ic>
                  </Slot>
                  <Slot $w={30}>25%</Slot>
                  <Slot $w={40}>
                    <Ic s={18}>
                      <circle cx="8" cy="8" r="7" fill="none" stroke={GREY} strokeWidth="1.5" />
                      <path d="M4 8h8M8 4v8" stroke={GREY} strokeWidth="1.5" />
                    </Ic>
                  </Slot>
                  <Slot $w={26}>
                    <Ic s={18}>
                      <circle cx="8" cy="8" r="7" fill="none" stroke={GREY} strokeWidth="1.5" />
                      <path d="M5 8l3-3 3 3-3 3z" fill={GREY} />
                    </Ic>
                  </Slot>
                  <Gap $w={8} />
                  <VSep />
                  <Slot $w={36}><Warn s={18} /></Slot>
                </Toolbar>
                <Toolbar $h={36}>
                  <Slot $w={56} $gap={4}>
                    <Ic s={18}>
                      <ellipse cx="8" cy="8" rx="7.5" ry="5.5" fill={GREY} />
                      <circle cx="8" cy="8" r="3" fill="#3c3f41" />
                      <circle cx="8" cy="8" r="1.5" fill={GREY} />
                    </Ic>
                    <Caret />
                  </Slot>
                  <Slot $w={26}>
                    <Ic s={18}>
                      <path d="M3 1v8a5 5 0 0 0 10 0V1" fill="none" stroke={GREY} strokeWidth="2" />
                      <path d="M2 2l12 13" stroke="#3c3f41" strokeWidth="2" />
                      <path d="M3 3l10 11" stroke={GREY} strokeWidth="1" />
                      <rect x="12" y="1" width="2" height="3" fill="#3592c4" />
                    </Ic>
                  </Slot>
                  <Slot $w={58}><ZeroDp>0dp</ZeroDp></Slot>
                  <Slot $w={36}>
                    <Ic s={20}>
                      <path d="M2 14c4 0 3-11 8-11" fill="none" stroke={GREY} strokeWidth="1.5" />
                      <circle cx="11" cy="3" r="1.8" fill={GREY} />
                      <path d="M10 10l4 4M14 10l-4 4" stroke="#c75450" strokeWidth="1.5" />
                    </Ic>
                  </Slot>
                  <Slot $w={32}>
                    <Ic s={19}>
                      <path d="M2 14l8-9 2 2-8 9z" fill={GREY} />
                      <path d="M12 1v3M15 5h-3M14 9l-1-2" stroke="#3592c4" />
                    </Ic>
                  </Slot>
                  <Gap $w={4} />
                  <VSep />
                  <Slot $w={60} $gap={6}>
                    <Ic s={18}>
                      <path d="M4 1h8M4 15h8M8 4v3M8 9v3" stroke={GREY} strokeWidth="2" />
                    </Ic>
                    <Caret />
                  </Slot>
                </Toolbar>
                <Surface>
                  <Phone>
                    <PhoneStatus>
                      <Ic w={11} h={9} vb="0 0 11 9"><path d="M0 1.500a8 8 0 0 1 11 0L5.500 9z" fill="#fff" /></Ic>
                      <Ic w={6} h={10} vb="0 0 6 10"><path d="M0 1h2V0h2v1h2v9H0z" fill="#fff" /></Ic>
                      8:00
                    </PhoneStatus>
                    <AppBar>calc</AppBar>
                    <PhoneBody>
                      <CalcTitle>Calculator</CalcTitle>
                      <Field $w={239} $h={18} $mt={39}>Number1(0)</Field>
                      <Field $w={238.5} $h={20} $mt={9}>number2(0)</Field>
                      <Field $w={234} $h={47} $mt={8} $big>result</Field>
                      <CalcRow $mt={18}>
                        <CalcBtn>+</CalcBtn>
                        <CalcBtn>N1^N2</CalcBtn>
                        <CalcBtn>-</CalcBtn>
                        <CalcBtn>/</CalcBtn>
                      </CalcRow>
                      <CalcRow $mt={18}>
                        <CalcBtn>X</CalcBtn>
                        <CalcBtn $w={55}>%(MOD)</CalcBtn>
                      </CalcRow>
                    </PhoneBody>
                    <PhoneNav>
                      <Ic s={13}><path d="M13 1v14L2 8z" fill="none" stroke="#fff" strokeWidth="1.5" /></Ic>
                      <Ic s={13}><circle cx="8" cy="8" r="6" fill="none" stroke="#fff" strokeWidth="1.5" /></Ic>
                      <Ic s={12}><rect x="2" y="2" width="12" height="12" fill="none" stroke="#fff" strokeWidth="1.6" /></Ic>
                    </PhoneNav>
                  </Phone>
                  <ResizeMark>
                    <Ic s={22} vb="0 0 22 22">
                      <path d="M1 19 19 1M7 21 21 7" stroke="#a0a0a0" />
                    </Ic>
                  </ResizeMark>
                  <SurfaceScroll />
                </Surface>
              </DesignCol>

              <Attr>
                <PanelHead $h={35} $pl={7} $pr={9} $gap={16}>
                  <HeadLabel>Attributes</HeadLabel>
                  <Find />
                  <Gear />
                  <Dash />
                </PanelHead>
                <AttrBody>
                  <AttrMsg>No component selected.</AttrMsg>
                  Select a component in the Component
                  <br />
                  Tree or on the Design Surface.
                </AttrBody>
              </Attr>
            </DesignRow>

            <DesignTabs>
              <DTab $w={68} $active>Design</DTab>
              <DTab $w={64}>Text</DTab>
            </DesignTabs>
          </Editor>
        </Upper>

        <Build>
          <BuildHead>
            <BuildLabel>Build:</BuildLabel>
            <BuildTab $w={130} $pl={15} $active>
              Build Output
              <CloseX />
            </BuildTab>
            <BuildTab $w={70} $pl={15}>
              Sync
              <CloseX />
            </BuildTab>
            <Grow />
            <Slot $w={32}><Gear /></Slot>
            <Slot $w={30}><Dash /></Slot>
          </BuildHead>
          <BuildBody>
            <BuildTools>
              <Hammer s={19} />
              <BuildToolSep />
              <Ic s={18}>
                <path d="M1 2h9v2H3v6H1z" fill={GREY} />
                <path d="M5 6h10v8H5z" fill={GREY} />
                <path d="M8 8l2.500 2L8 12" fill="none" stroke="#3c3f41" strokeWidth="1.3" />
              </Ic>
              <BuildToolSep />
              <Ic s={18}>
                <path d="M9 1l6 6-2 1-2-.5-3 3 .5 2L7 14l-3-3-3 4v-1l3-4-3-3 1.500-1 2 .5 3-3-.5-2z" fill={GREY} />
              </Ic>
            </BuildTools>
            <BuildTree>
              <BuildRow $indent={4}>
                <ArrowBox><Tri dir="down" /></ArrowBox>
                <CheckBox><Check /></CheckBox>
                <b>Build:</b>&nbsp;completed successfully<Muted>at 11/8/2019 2:24 AM</Muted>
                <Time>4 s 166 ms</Time>
              </BuildRow>
              <BuildRow $indent={26}>
                <ArrowBox><Tri dir="down" /></ArrowBox>
                <CheckBox><Check /></CheckBox>
                Run build<Muted>C:\Users\ASUS\AndroidStudioProjects\calc</Muted>
                <Time>3 s 988 ms</Time>
              </BuildRow>
              <BuildRow $indent={49}>
                <ArrowBox><Tri /></ArrowBox>
                <CheckBox><Check /></CheckBox>
                Load build
                <Time>11 ms</Time>
              </BuildRow>
              <BuildRow $indent={49}>
                <ArrowBox><Tri /></ArrowBox>
                <CheckBox><Check /></CheckBox>
                Configure build
                <Time>445 ms</Time>
              </BuildRow>
              <BuildRow $indent={73}>
                <CheckBox><Check /></CheckBox>
                Calculate task graph
                <Time>271 ms</Time>
              </BuildRow>
              <BuildRow $indent={49}>
                <ArrowBox><Tri /></ArrowBox>
                <CheckBox><Check /></CheckBox>
                Run tasks
                <Time>3 s 119 ms</Time>
              </BuildRow>
            </BuildTree>
          </BuildBody>
        </Build>
      </Center>

      <RightStripe>
        <StripeItem>
          <Elephant s={17} />
          <VText $down $ls={0.5}>Gradle</VText>
        </StripeItem>
        <StripeItem>
          <Ic s={15}><rect x="3" y="1" width="10" height="14" rx="1" fill="none" stroke={GREY} strokeWidth="1.5" /></Ic>
          <VText $down>Device File Explorer</VText>
        </StripeItem>
      </RightStripe>
    </Main>

    <BottomStripe>
      <BottomTool $w={84}>
        <Ic s={16}>
          <path d="M2 2l10 6.500L2 15z" fill={GREY} />
          <circle cx="12" cy="14" r="2" fill="#1fd11f" />
        </Ic>
        <span><u>4</u>: Run</span>
      </BottomTool>
      <BottomTool $w={103}>
        <Ic s={15}><path d="M1 2h13v2H1zM1 6h9v2H1zM1 10h12v2H1zM1 14h7v1H1z" fill={GREY} /></Ic>
        <span><u>6</u>: Logcat</span>
      </BottomTool>
      <BottomTool $w={84}>
        <Ic s={15}><path d="M1 2h14v3H1zM1 6.500h14v3H1zM1 11h14v3H1z" fill={GREY} /></Ic>
        TODO
      </BottomTool>
      <BottomTool $w={86}>
        <Ic s={16}>
          <rect x="1" y="1" width="14" height="13" fill={GREY} />
          <path d="M3 4l3 2.500L3 9M7 10h4" fill="none" stroke="#3c3f41" strokeWidth="1.2" />
        </Ic>
        Terminal
      </BottomTool>
      <BottomTool $w={75} $pl={11} $active>
        <Hammer s={16} c="#c8c8c8" />
        Build
      </BottomTool>
      <BottomTool $w={90} $pl={12}>
        <Ic s={16}>
          <path d="M1.500 13a6.500 6.500 0 0 1 13 0" fill="none" stroke={GREY} strokeWidth="2.4" />
          <path d="M7 13l3-6" stroke={GREY} strokeWidth="1.8" />
        </Ic>
        Profiler
      </BottomTool>
      <EventLog>
        <Badge>1</Badge>
        Event Log
      </EventLog>
    </BottomStripe>

    <StatusBar>
      <Ic s={16}>
        <path d="M4 1h11v11H4zM1 4v11h11" fill="none" stroke={GREY} strokeWidth="1.2" />
      </Ic>
      Source generation ended in 563 ms (13 minutes ago)
      <StatusRight>
        <Ic s={15}>
          <path d="M1 5V3a3 3 0 0 1 6 0v4" fill="none" stroke="#a0a2a4" strokeWidth="1.3" />
          <rect x="5" y="7" width="10" height="8" fill="#a0a2a4" />
        </Ic>
        <Ic s={16}>
          <path d="M4 3l1-2h6l1 2 2 2H2zM5 6h6v3H5zM2 15c0-4 2-5 6-5s6 1 6 5z" fill="#5c5e60" />
        </Ic>
      </StatusRight>
    </StatusBar>

    <Taskbar>
      <StartBtn>
        <Ic s={20} vb="0 0 20 20">
          <path d="M0 3l8-1.200V9.500H0zM9 1.700 20 0v9.500H9zM0 10.500h8v7.700L0 17zM9 10.500h11V20L9 18.300z" fill="#fff" />
        </Ic>
      </StartBtn>
      <SearchBox>
        <Cortana />
        <SearchText>Type here to search</SearchText>
        <Slot $w={36}>
          <Ic s={21}>
            <rect x="5.5" y="1" width="5" height="9" rx="2.5" fill="none" stroke="#333" strokeWidth="1.2" />
            <path d="M3.500 7a4.500 4.500 0 0 0 9 0M8 12v2M5 15h6" fill="none" stroke="#333" strokeWidth="1.2" />
          </Ic>
        </Slot>
      </SearchBox>
      <Slot $w={63}>
        <Ic s={20} vb="0 0 20 20">
          <path d="M1 1h12M1 19h12M1 5.500h12v9H1zM17 1v5M17 9v10" fill="none" stroke="#fff" strokeWidth="1.3" />
        </Ic>
      </Slot>
      <TaskSlot><FaEdge size={28} color="#0a78d4" /></TaskSlot>
      <TaskSlot>
        <Ic s={30} vb="0 0 30 30">
          <path d="M10 9V6a5 5 0 0 1 10 0v3" fill="none" stroke="#fff" strokeWidth="1.5" />
          <rect x="1" y="9" width="28" height="21" fill="#fff" />
          <path d="M8 13h6.500v6H8z" fill="#f25022" />
          <path d="M15.500 13H22v6h-6.500z" fill="#7fba00" />
          <path d="M8 20h6.500v6H8z" fill="#00a4ef" />
          <path d="M15.500 20H22v6h-6.500z" fill="#ffb900" />
        </Ic>
      </TaskSlot>
      <TaskSlot>
        <Ic s={28} vb="0 0 28 28">
          <path d="M1 3h10l2 3h14v20H1z" fill="#ffe38f" />
          <path d="M1 3h10l2 3H1z" fill="#e8c35a" />
          <path d="M7 16h14v10h-3v-6h-8v6H7z" fill="#3fa9e0" />
        </Ic>
      </TaskSlot>
      <TaskSlot>
        <Ic s={30} vb="0 0 30 30">
          <rect width="30" height="30" fill="#fff" />
          <path d="M5 11h20v4H5zM7 16h16v10H7z" fill="#9c0a0a" />
          <path d="M14 11h2v15h-2zM7 20h16v1.500H7z" fill="#fff" />
          <path d="M15 10c-5 0-8-1-7-4s6-1 7 4c1-5 6-7 7-4s-2 4-7 4z" fill="none" stroke="#c21a1a" strokeWidth="1.8" />
        </Ic>
      </TaskSlot>
      <TaskSlot>
        <FaSpotify size={30} color="#1ed760" />
      </TaskSlot>
      <TaskSlot>
        <Ic s={29} vb="0 0 30 30">
          <path d="M0 0h30v30H0z" fill="#21d789" />
          <path d="M0 15 15 0h15v10L15 30H0z" fill="#07c3f2" />
          <path d="M20 30l10-10v10z" fill="#fcf84a" />
          <rect x="4" y="4" width="22" height="22" fill="#111" />
          <text x="7" y="17" fill="#fff" fontFamily="Roboto, sans-serif" fontWeight="700" fontSize="12">PC</text>
          <rect x="7" y="20" width="8" height="1.6" fill="#fff" />
        </Ic>
      </TaskSlot>
      <TaskSlot>
        <WhatsBox><FaWhatsapp size={22} color="#fff" /></WhatsBox>
      </TaskSlot>
      <TaskSlot $active $open><StudioBadge s={30} /></TaskSlot>
      <TaskSlot $open>
        <Ic s={28} vb="0 0 28 28">
          <circle cx="14" cy="14" r="14" fill="#db4437" />
          <path d="M14 14 1.900 21A14 14 0 0 1 2 7z" fill="#0f9d58" />
          <path d="M14 14h14a14 14 0 0 1-14 14 14 14 0 0 1-12.100-7z" fill="#0f9d58" />
          <path d="M14 14h14a14 14 0 0 1-14 14z" fill="#ffcd40" />
          <circle cx="14" cy="14" r="6.3" fill="#fff" />
          <circle cx="14" cy="14" r="5" fill="#4285f4" />
        </Ic>
      </TaskSlot>
      <Tray>
        <Slot $w={30}>
          <Ic s={19}>
            <circle cx="5.5" cy="8" r="2.5" fill="none" stroke="#fff" />
            <circle cx="11" cy="4" r="2.5" fill="none" stroke="#fff" />
            <path d="M1 15c0-3 2-4.500 4.500-4.500S10 12 10 15M8 7.500c3-1 7 0 7 4.500" fill="none" stroke="#fff" />
          </Ic>
        </Slot>
        <Gap $w={14} />
        <Slot $w={30}>
          <Ic s={16}><path d="M1 11l7-6 7 6" fill="none" stroke="#fff" /></Ic>
        </Slot>
        <Slot $w={30}>
          <Ic s={21}>
            <ellipse cx="7" cy="9" rx="6" ry="3.5" fill="#ddd" />
            <ellipse cx="9" cy="6" rx="5" ry="3.5" fill="#777" />
            <circle cx="11.5" cy="11.5" r="4" fill="#e81123" />
            <path d="M10 10l3 3M13 10l-3 3" stroke="#fff" />
          </Ic>
        </Slot>
        <Slot $w={30}>
          <Ic s={20}>
            <rect x="1" y="4.5" width="13" height="7" fill="none" stroke="#fff" />
            <rect x="2.5" y="6" width="5" height="4" fill="#fff" />
            <rect x="14.3" y="6.5" width="1.2" height="3" fill="#fff" />
          </Ic>
        </Slot>
        <Slot $w={31}>
          <Ic s={21}>
            <path d="M1 6h3l3.500-3v10L4 10H1zM10 6a3 3 0 0 1 0 4M12 3.500a6.500 6.500 0 0 1 0 9" fill="none" stroke="#fff" />
          </Ic>
        </Slot>
        <Slot $w={31}>
          <Ic s={20}>
            <path d="M1 12a12 12 0 0 1 11-10M4 13a8 8 0 0 1 8-7.500M7 14a4.500 4.500 0 0 1 5-4" fill="none" stroke="#bbb" />
            <circle cx="12.5" cy="13.5" r="1.3" fill="#fff" />
          </Ic>
        </Slot>
        <TrayText $w={42}>ENG<br />IN</TrayText>
        <Gap $w={1} />
        <TrayText $w={86}>4:58 AM<br />11/8/2019</TrayText>
        <NotifyWrap>
          <Ic s={22} vb="0 0 22 22">
            <path d="M1 2h20v15H12l-3 4v-4H1z" fill="#fff" />
            <path d="M4 6h14M4 9h14M4 12h10" stroke="#111" />
          </Ic>
          <NotifyCount>1</NotifyCount>
        </NotifyWrap>
      </Tray>
    </Taskbar>
  </Page>
);

export default App;
